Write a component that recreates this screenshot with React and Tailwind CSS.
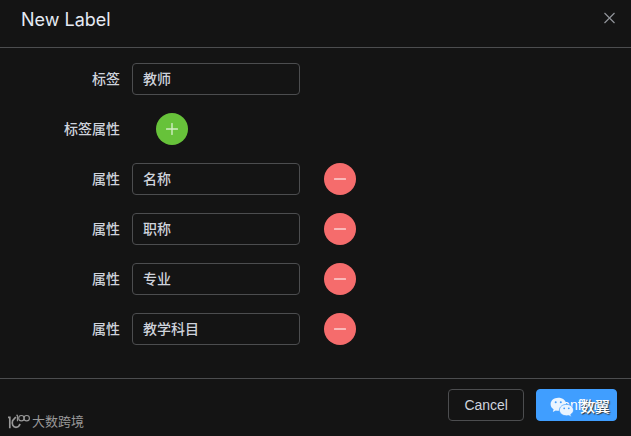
import React, { useState } from 'react';

const INITIAL_PROPERTIES = [
  { id: 1, value: '名称' },
  { id: 2, value: '职称' },
  { id: 3, value: '专业' },
  { id: 4, value: '教学科目' },
];

const inputClass =
  'h-8 w-[168px] rounded border border-[#4c4d4f] bg-transparent px-2.5 pb-0.5 text-sm font-medium text-[#cfd3dc] outline-none focus:border-[#409eff]';

// One form line: right aligned label, then the control
function FormRow({ label, htmlFor, children }) {
  return (
    <div className="mb-[18px] flex h-8 items-center">
      <label htmlFor={htmlFor} className="w-[120px] shrink-0 text-right text-sm font-medium text-[#cfd3dc]">
        {label}
      </label>
      <div className="flex items-center pl-3">{children}</div>
    </div>
  );
}

function RoundButton({ id, label, onClick, color, children }) {
  return (
    <button
      type="button"
      id={id}
      aria-label={label}
      onClick={onClick}
      className={`ml-6 flex size-8 items-center justify-center rounded-full ${color}`}
    >
      <svg viewBox="0 0 12 12" className="size-3" fill="none" stroke="#fff" strokeOpacity="0.7" strokeWidth="1.4" strokeLinecap="round">
        {children}
      </svg>
    </button>
  );
}

function WeChatIcon() {
  return (
    <svg viewBox="0 0 24 20" className="h-5 w-6 shrink-0">
      <path fill="#eaf4ff" d="M8.3.8C3.9.8.6 3.6.6 7.2c0 2.1 1.1 3.9 3 5.1l-.8 2.8 3-1.6c.8.2 1.6.3 2.5.3 4.3 0 7.8-2.9 7.8-6.6S12.6.8 8.3.8z" />
      <path fill="#eaf4ff" stroke="#409eff" strokeWidth="0.7" d="M16.5 7.4c-4 0-7.1 2.5-7.1 5.7s3.1 5.7 7.1 5.7c.8 0 1.5-.1 2.2-.3l2.7 1.4-.7-2.4c1.7-1.1 2.8-2.6 2.8-4.4 0-3.2-3.1-5.7-7-5.7z" />
      <circle cx="5.7" cy="5.2" r="1" fill="#409eff" />
      <circle cx="10.8" cy="5.2" r="1" fill="#409eff" />
      <circle cx="14.2" cy="11.3" r="0.9" fill="#409eff" />
      <circle cx="18.8" cy="11.3" r="0.9" fill="#409eff" />
    </svg>
  );
}

function SiteMark() {
  return (
    <div className="pointer-events-none absolute bottom-1 left-2 flex items-center gap-0.5 text-[#999]">
      <svg viewBox="0 0 22 16" className="h-4 w-[22px]" fill="none" stroke="currentColor">
        <path strokeWidth="1.7" d="M0 3.4h1.8v10.8" />
        <path strokeWidth="1.7" d="M7.8 3 4.6 6.6c-1.2 4 .6 6.7 3.4 6.7 2 0 3.4-1.2 4-3.4" />
        <path strokeWidth="1.1" d="M8.2 1.3h1.2v6" />
        <circle cx="13.4" cy="4.2" r="2.7" strokeWidth="1.1" />
        <circle cx="18.7" cy="4.2" r="2.7" strokeWidth="1.1" />
      </svg>
      <span className="text-[13px] leading-5">大数跨境</span>
    </div>
  );
}

function App() {
  const [name, setName] = useState('教师');
  const [properties, setProperties] = useState(INITIAL_PROPERTIES);

  const addProperty = () => setProperties([...properties, { id: Date.now(), value: '' }]);
  const removeProperty = (id) => setProperties(properties.filter((p) => p.id !== id));
  const updateProperty = (id, value) =>
    setProperties(properties.map((p) => (p.id === id ? { ...p, value } : p)));

  return (
    <div className="relative flex min-h-screen flex-col bg-[#141414] font-['Liberation_Sans','Noto_Sans_CJK_SC',sans-serif] text-[#cfd3dc]">
      <header className="flex h-12 items-start justify-between border-b border-[#4c4d4f] pt-2 pr-4 pl-[21px]">
        <h1 className="font-['Inter','Liberation_Sans',sans-serif] text-lg leading-6 text-[#e5eaf3]">New Label</h1>
        <button type="button" aria-label="Close" className="flex h-5 items-center text-[#909399]">
          <svg viewBox="0 0 12 12" className="size-3" fill="none" stroke="currentColor" strokeWidth="1.2">
            <path d="M1.5 1l10 10M11.5 1l-10 10" />
          </svg>
        </button>
      </header>

      <form className="py-[15px]">
        <FormRow label="标签" htmlFor="label-name">
          <input id="label-name" className={inputClass} value={name} onChange={(e) => setName(e.target.value)} />
        </FormRow>
        <FormRow label="标签属性" htmlFor="add-property">
          <RoundButton id="add-property" label="Add property" onClick={addProperty} color="bg-[#67c23a]">
            <path d="M.6 6h10.8M6 .6v10.8" />
          </RoundButton>
        </FormRow>
        {properties.map((p) => (
          <FormRow key={p.id} label="属性" htmlFor={`property-${p.id}`}>
            <input
              id={`property-${p.id}`}
              className={inputClass}
              value={p.value}
              onChange={(e) => updateProperty(p.id, e.target.value)}
            />
            <RoundButton label="Remove property" onClick={() => removeProperty(p.id)} color="bg-[#f56c6c]">
              <path d="M.6 6h10.8" />
            </RoundButton>
          </FormRow>
        ))}
      </form>

      <footer className="flex grow items-start justify-end gap-3 border-t border-[#4c4d4f] px-3.5 pt-2.5">
        <button type="button" className="h-8 rounded border border-[#4c4d4f] px-[15px] text-sm font-medium">
          Cancel
        </button>
        <div className="relative">
          <button type="button" className="h-8 rounded border border-[#409eff] bg-[#409eff] px-[15px] text-sm font-medium text-white">
            Confirm
          </button>
          <div className="pointer-events-none absolute top-2 left-3.5 flex items-center gap-1.5">
            <WeChatIcon />
            <span className="text-[15px] leading-5 font-medium whitespace-nowrap text-white [text-shadow:1px_1px_1px_#333]">数翼</span>
          </div>
        </div>
      </footer>

      <SiteMark />
    </div>
  );
}

export default App;
